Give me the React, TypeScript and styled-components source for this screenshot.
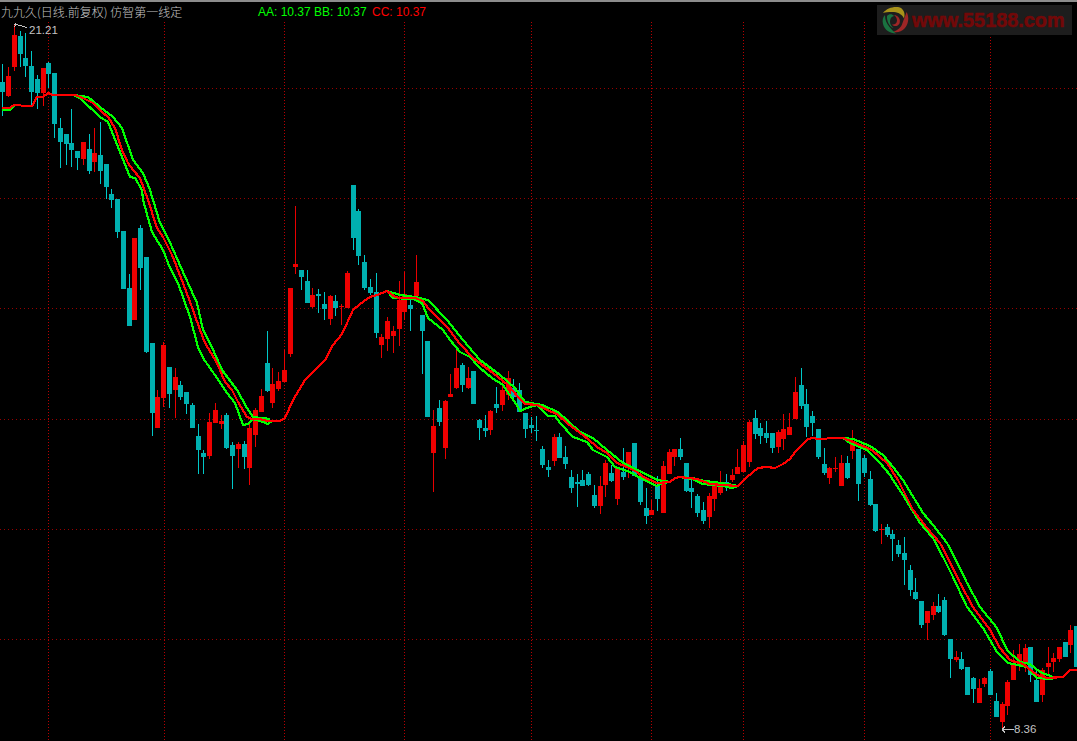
import React from "react";
import styled, { createGlobalStyle } from "styled-components";

const Global = createGlobalStyle`
  html, body { margin: 0; padding: 0; background: #000; }
  body { width: 1077px; height: 741px; overflow: hidden; }
`;

const Page = styled.div`
  position: relative;
  display: flex;
  flex-direction: column;
  width: 1077px;
  height: 741px;
  background: #000;
  overflow: hidden;
`;

const TopRule = styled.div`
  flex: none;
  height: 2px;
  background: #8c8c8c;
`;

const Header = styled.header`
  flex: none;
  display: flex;
  align-items: center;
  height: 20px;
  padding-left: 1px;
  font: 12px/16px "Liberation Sans", "Noto Sans CJK SC", sans-serif;
  white-space: nowrap;
`;

const Title = styled.span`
  width: 257px;
  flex: none;
  color: #c4c4c4;
  font-family: "Noto Sans CJK SC", "Liberation Sans", sans-serif;
  font-size: 12px;
  font-weight: 300;
`;

const Readout = styled.span<{ $tone: string; $w: number }>`
  flex: none;
  width: ${(p) => p.$w}px;
  color: ${(p) => p.$tone};
`;

const Logo = styled.div`
  position: absolute;
  top: 5px;
  right: 5px;
  width: 195px;
  height: 30px;
  display: flex;
  align-items: center;
  gap: 3px;
  padding-left: 4px;
  box-sizing: border-box;
  background: #1d1d1d;
`;

const SwirlIcon = styled.svg`
  flex: none;
  width: 28px;
  height: 28px;
`;

const LogoText = styled.span`
  color: #720808;
  font: bold 21px/30px "Liberation Sans", sans-serif;
  -webkit-text-stroke: 0.6px #720808;
  transform: scaleX(0.945);
  transform-origin: left center;
  white-space: nowrap;
`;

const Chart = styled.svg`
  display: block;
  flex: none;
  width: 1077px;
  height: 719px;
`;

const RowLine = styled.line`
  stroke: #980000;
  stroke-width: 1;
  stroke-dasharray: 1 3;
  shape-rendering: crispEdges;
`;

const ColumnLine = styled.line`
  stroke: #b80000;
  stroke-width: 1;
  stroke-dasharray: 1 2;
  shape-rendering: crispEdges;
`;

const Wick = styled.rect<{ $up: boolean }>`
  fill: ${(p) => (p.$up ? "#e80000" : "#00c8c8")};
  shape-rendering: crispEdges;
`;

const Body = styled.rect<{ $up: boolean }>`
  fill: ${(p) => (p.$up ? "#ee0000" : "#00b0b0")};
  shape-rendering: crispEdges;
`;

const Average = styled.polyline<{ $tone: string }>`
  fill: none;
  stroke: ${(p) => p.$tone};
  stroke-width: 2.2;
  stroke-linejoin: round;
  shape-rendering: crispEdges;
`;

const Callout = styled.text`
  fill: #c4c4c4;
  font: 11.5px "Liberation Sans", sans-serif;
`;

const CalloutArrow = styled.path`
  fill: none;
  stroke: #c4c4c4;
  stroke-width: 1;
  shape-rendering: crispEdges;
`;

// x, r(ise)=1 / fall=0, high, body top, body bottom, low
type C = [number, number, number, number, number, number];
const candles: C[] = [
  [2,0,64,82,92,116],[8,1,67,76,96,97],[14,1,24,35,67,71],[20,0,31,36,54,67],[25,0,33,58,66,77],[31,0,51,66,92,106],
  [37,0,75,79,93,109],[43,1,68,68,93,106],[48,0,62,63,74,88],[54,0,73,73,124,138],[60,0,118,128,142,168],[66,0,134,134,144,165],
  [71,0,109,143,150,167],[77,0,151,151,158,170],[83,1,142,142,159,165],[89,0,134,149,171,174],[94,1,128,153,162,172],[100,0,122,155,171,184],
  [106,0,164,164,187,199],[111,0,189,194,200,208],[117,0,199,199,232,238],[123,0,231,231,289,289],[129,0,274,288,326,326],[134,1,238,238,320,320],
  [140,0,225,228,268,290],[146,0,257,257,352,353],[152,0,343,343,413,436],[157,1,390,397,428,428],[163,1,342,345,398,407],[169,0,367,367,394,408],
  [175,1,368,377,390,418],[180,0,381,385,397,400],[186,0,392,392,404,414],[192,0,403,405,428,428],[198,0,424,436,450,474],[203,0,450,453,457,474],
  [209,1,413,422,456,459],[215,1,403,410,423,423],[221,1,415,421,424,429],[226,0,413,415,448,449],[232,0,442,445,456,489],[238,1,442,444,449,468],
  [244,0,441,444,457,469],[249,1,424,428,468,485],[255,1,408,410,435,447],[261,1,389,396,412,412],[267,0,331,363,391,392],[272,1,368,384,403,408],
  [278,1,372,381,389,391],[284,1,350,370,382,382],[290,1,288,288,354,357],[295,1,206,264,267,274],[301,0,270,270,277,290],[307,0,270,281,303,303],
  [312,1,288,295,307,308],[318,0,289,294,296,313],[324,0,292,304,309,320],[330,1,295,296,319,325],[335,0,295,301,308,316],[341,1,304,306,307,325],
  [347,1,271,273,308,308],[353,0,185,185,238,250],[358,0,209,211,256,265],[364,0,255,262,288,290],[370,0,279,287,293,295],[376,0,273,292,333,338],
  [381,1,334,337,345,358],[387,1,317,321,339,351],[393,1,326,331,336,353],[399,1,281,300,329,346],[404,1,272,294,312,320],[410,0,296,305,309,331],
  [416,1,255,282,296,296],[422,0,315,315,331,374],[427,0,341,341,417,417],[433,1,410,426,453,492],[439,0,400,408,422,426],[445,1,400,401,448,459],
  [450,1,374,394,397,397],[456,1,348,368,388,389],[462,0,363,365,385,392],[468,1,367,378,388,389],[473,0,371,371,404,404],[479,0,419,420,428,440],
  [485,0,415,428,431,437],[490,1,410,411,430,435],[496,0,387,404,408,413],[502,1,381,390,405,411],[508,1,371,378,395,400],[513,0,379,388,397,400],
  [519,0,383,390,412,412],[525,0,413,413,429,438],[531,0,417,425,428,433],[536,0,416,430,431,441],[542,0,446,449,465,468],[548,0,460,467,470,477],
  [554,1,434,437,461,466],[559,0,433,437,458,458],[565,0,446,457,464,469],[571,0,470,477,488,493],[577,0,474,482,484,507],[582,0,470,480,486,486],
  [588,0,472,474,485,486],[594,0,485,495,506,508],[600,1,476,486,506,514],[605,1,460,463,485,497],[611,0,465,473,481,482],[617,1,468,468,499,505],
  [623,0,448,472,477,480],[628,1,452,452,468,478],[634,0,443,443,476,476],[640,0,476,476,502,505],[646,0,488,508,516,524],[651,1,500,510,515,515],
  [657,0,476,485,499,511],[663,1,461,466,513,513],[669,1,449,452,474,474],[674,1,449,449,457,466],[680,0,438,449,457,460],[686,0,463,463,491,492],
  [691,0,477,488,492,508],[697,0,494,496,513,517],[703,0,502,510,521,524],[709,1,493,496,517,528],[714,1,485,485,499,511],[720,1,471,487,493,495],
  [726,0,474,482,487,491],[732,1,469,475,480,482],[737,1,449,467,474,474],[743,1,441,445,472,472],[749,1,420,422,462,467],[755,0,410,418,434,439],
  [760,0,423,428,436,444],[766,0,421,433,438,443],[772,0,433,433,448,453],[778,1,430,432,447,453],[783,1,414,429,439,450],[789,1,413,427,435,435],
  [795,1,377,392,419,419],[801,0,368,385,406,409],[806,0,389,404,427,437],[812,0,411,416,423,436],[818,0,429,429,457,459],[824,0,448,464,473,475],
  [829,1,467,468,478,484],[835,1,457,468,469,472],[841,1,455,463,486,486],[847,0,456,463,478,479],[852,1,430,443,451,459],[858,0,449,449,484,501],
  [864,0,455,458,473,477],[870,0,471,479,505,506],[875,0,504,504,531,532],[881,1,524,529,530,544],[887,0,524,527,535,537],[892,0,530,534,539,561],
  [898,0,540,545,554,557],[904,0,537,553,560,585],[910,0,565,570,590,596],[915,0,578,592,599,600],[921,0,601,601,625,628],[927,1,611,611,623,640],
  [933,1,602,606,615,620],[938,0,594,606,612,613],[944,0,597,600,635,636],[950,0,639,639,659,678],[956,1,651,657,660,662],[961,0,652,659,669,670],
  [967,0,667,667,695,695],[973,0,677,678,689,703],[979,1,679,688,703,703],[984,1,677,678,684,687],[990,0,669,671,695,695],[996,0,693,701,717,717],
  [1002,1,702,704,722,729],[1007,1,680,682,706,715],[1013,1,650,665,680,680],[1019,1,644,654,664,671],[1025,1,644,648,662,672],[1030,0,647,647,675,682],
  [1036,0,670,680,702,702],[1042,1,668,670,695,702],[1048,1,647,663,667,676],[1053,1,653,658,662,672],[1059,1,647,647,659,662],[1065,0,642,642,657,657],
  [1070,1,625,630,645,653],[1076,0,626,626,667,667],
];

const red = "2,108 10,108 14,105 20,105 22,106 32,106 37,97 43,97 48,93 53,95 75,95 83,98 93,103 102,112 108,117 115,128 122,150 128,163 133,170 140,178 148,200 157,228 163,237 172,255 183,283 193,310 200,330 205,343 217,363 225,382 232,390 238,402 247,417 252,419 260,419 267,421 280,421 285,418 293,400 305,380 325,360 333,345 342,334 353,310 360,304 370,297 377,295 387,291 395,297 400,298 415,298 423,301 428,308 447,327 460,344 473,358 493,373 508,385 518,397 525,404 538,405 547,410 557,414 567,423 580,433 588,439 597,447 607,453 617,463 627,467 637,472 643,477 657,483 670,482 675,478 680,477 697,479 710,484 723,485 738,486 747,477 758,468 767,467 775,468 783,464 790,459 795,452 808,439 813,438 818,439 826,439 828,438 843,438 853,442 872,450 887,463 898,480 913,510 927,528 940,543 950,562 960,583 973,607 990,630 1000,648 1010,660 1023,664 1037,675 1047,678 1063,677 1070,670 1077,670";

const greens = [
  "2,110 10,110 14,106",
  "73,95 88,97 100,107 113,117 122,128 133,160 143,173 150,190 153,200 160,223 168,238 183,272 197,303 203,330 210,343 222,370 237,390 247,408 253,417 270,419",
  "73,95 80,98 100,117 108,122 118,147 130,177 135,178 142,190 143,200 152,232 163,250 170,268 178,283 190,317 198,347 203,358 217,378 227,393 235,403 243,425 248,424 253,419 263,422 268,424 272,421",
  "387,291 400,295 415,297 428,300 447,320 463,340 480,360 500,375 515,388 525,402 542,405 558,412 580,432 593,438 607,450 623,463 638,470 657,480 670,482",
  "387,291 393,298 413,299 422,303 428,318 443,330 450,340 460,352 470,357 480,368 492,378 503,385 518,407 520,411 527,408 537,405 548,416 555,416 560,423 573,437 587,442 593,450 607,457 615,467 630,472 640,478 657,486 663,483 670,482",
  "680,477 692,478 705,481 713,482 728,484 738,486",
  "680,477 692,479 703,484 723,486 732,488 738,486",
  "843,438 853,439 870,446 883,455 893,467 903,480 923,513 933,525 947,543 957,562 967,583 980,607 997,628 1007,650 1020,662 1030,664 1040,672 1053,677",
  "843,438 850,443 867,450 880,463 890,475 893,480 903,495 920,523 933,538 943,557 953,577 967,607 983,628 997,652 1008,663 1027,667 1037,678 1053,679",
];

const rows = [88, 198, 308, 419, 529, 639];
const columns = [48, 164, 284, 404, 531, 651, 743, 864, 990];

function Swirl() {
  return (
    <SwirlIcon viewBox="0 0 28 28">
      <path d="M2 7 C6 2 13 0 19 1.500 C23 3.500 24.500 8 23 12.500 C21.500 9 18 6.500 13 6 C9 5.800 5 6 2 7Z" fill="#a8921a" />
      <path d="M25.500 6 C28.500 11 27.500 18 24 22 C20.500 26 16 27 12 26 C16.500 24.500 20.500 21 21.500 17 C23 13 24.500 9.500 25.500 6Z" fill="#9e2626" />
      <path d="M15 27.500 C9 27.500 3.500 24 2 18 C1 14 2 11 4 9 C4 14 5.500 17.500 8.500 21 C10.500 23.500 12.500 25.500 15 27.500Z" fill="#1a7340" />
      <path d="M6 10 C8 7.500 11.500 8 13 10 C10 10.500 9 13 9 15.500 C9 18 10 20 12.500 22 C8.500 21 5.500 15 6 10Z" fill="#1a7340" />
      <path d="M13 9 C17.500 9.500 20 13.500 18.500 17.500 C17 20.500 13 21 11 18.500 C13.500 19 16 17.500 16 14.500 C16 12 14.500 10 13 9Z" fill="#9e2626" />
    </SwirlIcon>
  );
}

export default function App() {
  return (
    <Page>
      <Global />
      <TopRule />
      <Header>
        <Title>九九久(日线.前复权) 仿智第一线定</Title>
        <Readout $tone="#00ff00" $w={56}>AA: 10.37</Readout>
        <Readout $tone="#00ff00" $w={58}>BB: 10.37</Readout>
        <Readout $tone="#ff0000" $w={60}>CC: 10.37</Readout>
      </Header>
      <Logo>
        <Swirl />
        <LogoText>www.55188.com</LogoText>
      </Logo>
      <Chart viewBox="0 22 1077 719">
        {rows.map((y) => (
          <RowLine key={y} x1={0} x2={1077} y1={y + 0.5} y2={y + 0.5} />
        ))}
        {columns.map((x) => (
          <ColumnLine key={x} x1={x + 0.5} x2={x + 0.5} y1={22} y2={741} />
        ))}
        {candles.map(([x, up, hi, top, bot, lo]) => (
          <g key={x}>
            <Wick $up={!!up} x={x} y={hi} width={1} height={lo - hi} />
            <Body $up={!!up} x={x - 2} y={top} width={5} height={Math.max(1, bot - top)} />
          </g>
        ))}
        {greens.map((pts) => (
          <Average key={pts} $tone="#00ff00" points={pts} />
        ))}
        <Average $tone="#ff0000" points={red} />
        <CalloutArrow d="M14.500 27 L16 23.500 M14.500 24 L27 27.500" />
        <Callout x={29} y={34}>21.21</Callout>
        <CalloutArrow d="M1002 729.500 H1014 M1002 729.500 L1005 726.500 M1002 729.500 L1005 732.500" />
        <Callout x={1014} y={733}>8.36</Callout>
      </Chart>
    </Page>
  );
}
